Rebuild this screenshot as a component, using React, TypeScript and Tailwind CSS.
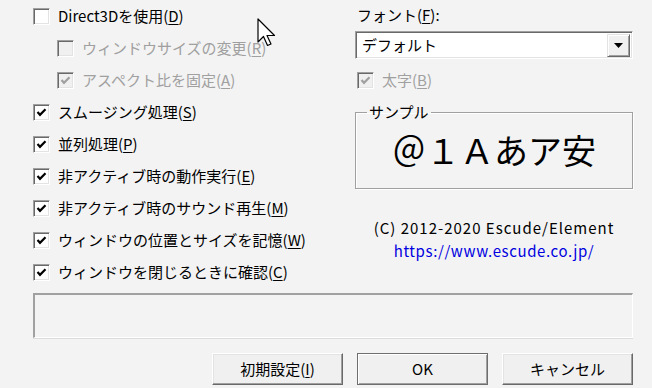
import type { ReactNode } from 'react';

const font = "font-['Noto_Sans_CJK_JP',sans-serif]";

function Mn({ children }: { children: ReactNode }) {
  return <span className="underline underline-offset-2 decoration-1">{children}</span>;
}

interface CheckProps {
  checked?: boolean;
  disabled?: boolean;
  indent?: boolean;
  children: ReactNode;
}

function CheckRow({ checked, disabled, indent, children }: CheckProps) {
  return (
    <div className={`flex items-center h-[32px] gap-[8px] ${indent ? 'ml-[24px]' : ''}`}>
      <span
        className={`flex items-center justify-center w-[17px] h-[17px] border border-t-[#a0a0a0] border-l-[#a0a0a0] border-b-white border-r-white shadow-[inset_1px_1px_0_#696969,inset_-1px_-1px_0_#e3e3e3] ${
          disabled ? 'bg-[#f0f0f0]' : 'bg-white'
        }`}
      >
        {checked && (
          <svg width="11" height="11" viewBox="0 0 11 11">
            <polyline
              points="1.5,5 4,7.8 9.5,2.2"
              fill="none"
              stroke={disabled ? '#a0a0a0' : '#000'}
              strokeWidth="2.2"
            />
          </svg>
        )}
      </span>
      <span className={`text-[15px] leading-[20px] ${disabled ? 'text-[#a0a0a0]' : 'text-black'}`}>
        {children}
      </span>
    </div>
  );
}

function Button({ children, isDefault }: { children: ReactNode; isDefault?: boolean }) {
  return (
    <button
      className={`w-[131px] h-[32px] flex items-center justify-center text-[15px] text-black bg-[#f0f0f0] border ${
        isDefault
          ? 'border-[#6e6e6e] shadow-[inset_1px_1px_0_#fff,inset_-1px_-1px_0_#a0a0a0]'
          : 'border-t-white border-l-white border-b-[#696969] border-r-[#696969] shadow-[inset_-1px_-1px_0_#a0a0a0,inset_1px_1px_0_#e3e3e3]'
      }`}
    >
      {children}
    </button>
  );
}

export default function App() {
  return (
    <div className={`relative w-[652px] h-[388px] bg-[#f3f3f3] pl-[33px] pr-[19px] ${font} text-black overflow-hidden`}>
      <div className="flex">
        {/* Left options */}
        <div className="w-[322px] flex flex-col">
          <CheckRow>Direct3Dを使用(<Mn>D</Mn>)</CheckRow>
          <CheckRow indent disabled>ウィンドウサイズの変更(<Mn>R</Mn>)</CheckRow>
          <CheckRow indent disabled checked>アスペクト比を固定(<Mn>A</Mn>)</CheckRow>
          <CheckRow checked>スムージング処理(<Mn>S</Mn>)</CheckRow>
          <CheckRow checked>並列処理(<Mn>P</Mn>)</CheckRow>
          <CheckRow checked>非アクティブ時の動作実行(<Mn>E</Mn>)</CheckRow>
          <CheckRow checked>非アクティブ時のサウンド再生(<Mn>M</Mn>)</CheckRow>
          <CheckRow checked>ウィンドウの位置とサイズを記憶(<Mn>W</Mn>)</CheckRow>
          <CheckRow checked>ウィンドウを閉じるときに確認(<Mn>C</Mn>)</CheckRow>
        </div>

        {/* Right: font + sample */}
        <div className="w-[278px] flex flex-col">
          <div className="h-[31px] flex items-center pl-[2px] text-[15px]">
            フォント(<Mn>F</Mn>):
          </div>
          <div className="h-[28px] flex items-center bg-white border border-t-[#a0a0a0] border-l-[#a0a0a0] border-b-white border-r-white shadow-[inset_1px_1px_0_#696969,inset_-1px_-1px_0_#e3e3e3] pl-[6px] pr-[2px]">
            <span className="flex-1 text-[15px] leading-[20px]">デフォルト</span>
            <span className="w-[23px] h-[23px] flex items-center justify-center bg-[#f0f0f0] border border-t-[#e3e3e3] border-l-[#e3e3e3] border-b-[#696969] border-r-[#696969] shadow-[inset_1px_1px_0_#fff,inset_-1px_-1px_0_#a0a0a0]">
              <svg width="9" height="5" viewBox="0 0 9 5">
                <polygon points="0,0 9,0 4.5,5" fill="#000" />
              </svg>
            </span>
          </div>
          <div className="h-[42px] flex items-center pl-[2px]">
            <CheckRow disabled checked>太字(<Mn>B</Mn>)</CheckRow>
          </div>
          <fieldset className="mt-[3px] h-[85px] border border-[#a0a0a0] shadow-[inset_1px_1px_0_#fff,1px_1px_0_#fff]">
            <legend className="ml-[11px] px-[2px] text-[15px] leading-[16px]">サンプル</legend>
            <div className="h-[60px] flex items-center justify-center text-[34px] leading-none">
              ＠１Ａあア安
            </div>
          </fieldset>
          <div className="mt-[27px] text-center text-[15px] leading-[23px]">
            <div className="tracking-[1px]">(C) 2012-2020 Escude/Element</div>
            <div className="text-[#0000e0] tracking-[0.6px]">https://www.escude.co.jp/</div>
          </div>
        </div>
      </div>

      {/* Status box */}
      <div className="mt-[5px] h-[45px] border-t-2 border-l-2 border-t-[#a0a0a0] border-l-[#a0a0a0] border-b border-r border-b-white border-r-white shadow-[0_1px_0_#dcdcdc]" />

      {/* Buttons */}
      <div className="mt-[15px] flex justify-end gap-[14px]">
        <Button>初期設定(<Mn>I</Mn>)</Button>
        <Button isDefault>OK</Button>
        <Button>キャンセル</Button>
      </div>

      {/* Mouse pointer */}
      <svg className="absolute left-[257px] top-[18px]" width="20" height="30" viewBox="0 0 20 30">
        <path
          d="M1 1 L1 24 L6.5 18.5 L10.5 27.5 L14 26 L10 17.5 L17.5 17.5 Z"
          fill="#fff"
          stroke="#000"
          strokeWidth="1.2"
          strokeLinejoin="round"
        />
      </svg>
    </div>
  );
}
